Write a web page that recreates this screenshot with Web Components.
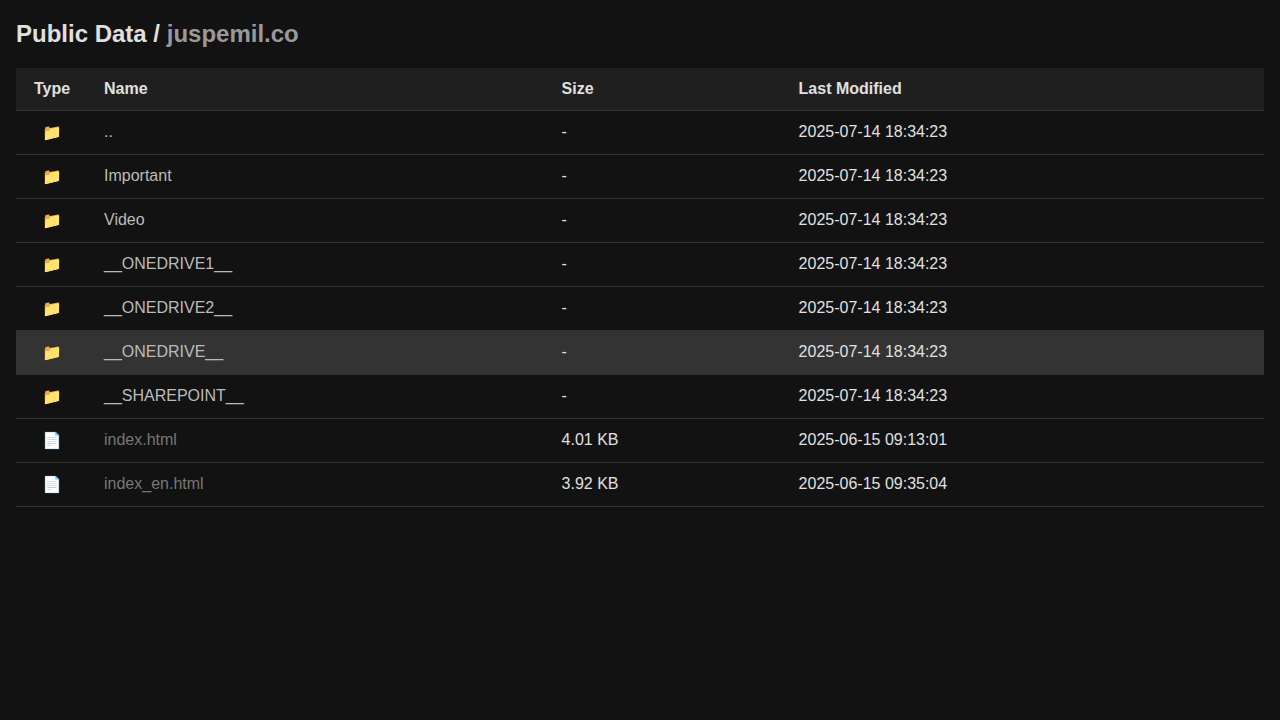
<!DOCTYPE html>
<html lang="en"><head><meta charset="utf-8"><title>Public Data</title>
<style>
html,body{margin:0;background:#121212;height:100%}
body{font-family:"Liberation Sans",Arial,sans-serif;color:#e0e0e0}
</style></head><body>
<template id="t-page"><style>
:host{display:block;padding:20px 16px;box-sizing:border-box}
h1{margin:0 0 20px;font-size:24px;line-height:28px;font-weight:700;color:#e0e0e0}
</style><h1><slot name="title"></slot></h1><slot></slot></template>

<template id="t-title"><style>
:host{display:inline}
span{color:#999}
</style><slot></slot> / <span><slot name="site"></slot></span></template>

<template id="t-table"><style>
:host{display:block}
</style><slot></slot></template>

<template id="t-head"><style>
:host{display:grid;grid-template-columns:70px 457.6px 237px 483.4px;height:43px;box-sizing:border-box;background:#1f1f1f;border-bottom:1px solid #333;align-items:center;font-size:16px;font-weight:700;color:#e0e0e0}
div{padding:0 18px}
div:first-child{padding:0;text-align:center}
</style><div>Type</div><div>Name</div><div>Size</div><div>Last Modified</div></template>

<template id="t-row"><style>
:host{display:grid;grid-template-columns:70px 457.6px 237px 483.4px;height:44px;box-sizing:border-box;padding-bottom:1px;border-bottom:1px solid #333;align-items:center;font-size:16px;color:#e0e0e0}
:host([active]){background:#333}
div{padding:0 18px;line-height:18px}
.icon{padding:2px 0 0 2px;text-align:center;font-size:16px;line-height:20px;font-family:"Liberation Sans","Noto Color Emoji",sans-serif}
.name{color:#bbb}
:host([kind=file]) .name{color:#777}
</style><div class="icon"></div><div class="name"><slot></slot></div><div class="size"></div><div class="date"></div></template>

<data-page>
  <page-title slot="title">Public Data<span slot="site">juspemil.co</span></page-title>
  <file-table>
    <file-head></file-head>
    <file-row size="-" date="2025-07-14 18:34:23">..</file-row>
    <file-row size="-" date="2025-07-14 18:34:23">Important</file-row>
    <file-row size="-" date="2025-07-14 18:34:23">Video</file-row>
    <file-row size="-" date="2025-07-14 18:34:23">__ONEDRIVE1__</file-row>
    <file-row size="-" date="2025-07-14 18:34:23">__ONEDRIVE2__</file-row>
    <file-row size="-" date="2025-07-14 18:34:23" active>__ONEDRIVE__</file-row>
    <file-row size="-" date="2025-07-14 18:34:23">__SHAREPOINT__</file-row>
    <file-row kind="file" size="4.01 KB" date="2025-06-15 09:13:01">index.html</file-row>
    <file-row kind="file" size="3.92 KB" date="2025-06-15 09:35:04">index_en.html</file-row>
  </file-table>
</data-page>
<script>
function simple(name,tpl,init){
  customElements.define(name,class extends HTMLElement{
    constructor(){super();this.attachShadow({mode:"open"}).appendChild(document.getElementById(tpl).content.cloneNode(true));}
    connectedCallback(){if(init)init(this);}
  });
}
simple("data-page","t-page");
simple("page-title","t-title");
simple("file-table","t-table");
simple("file-head","t-head");
simple("file-row","t-row",el=>{
  const s=el.shadowRoot;
  s.querySelector(".icon").textContent=el.getAttribute("kind")==="file"?"\u{1F4C4}":"\u{1F4C1}";
  s.querySelector(".size").textContent=el.getAttribute("size");
  s.querySelector(".date").textContent=el.getAttribute("date");
});
</script>
</body></html>
